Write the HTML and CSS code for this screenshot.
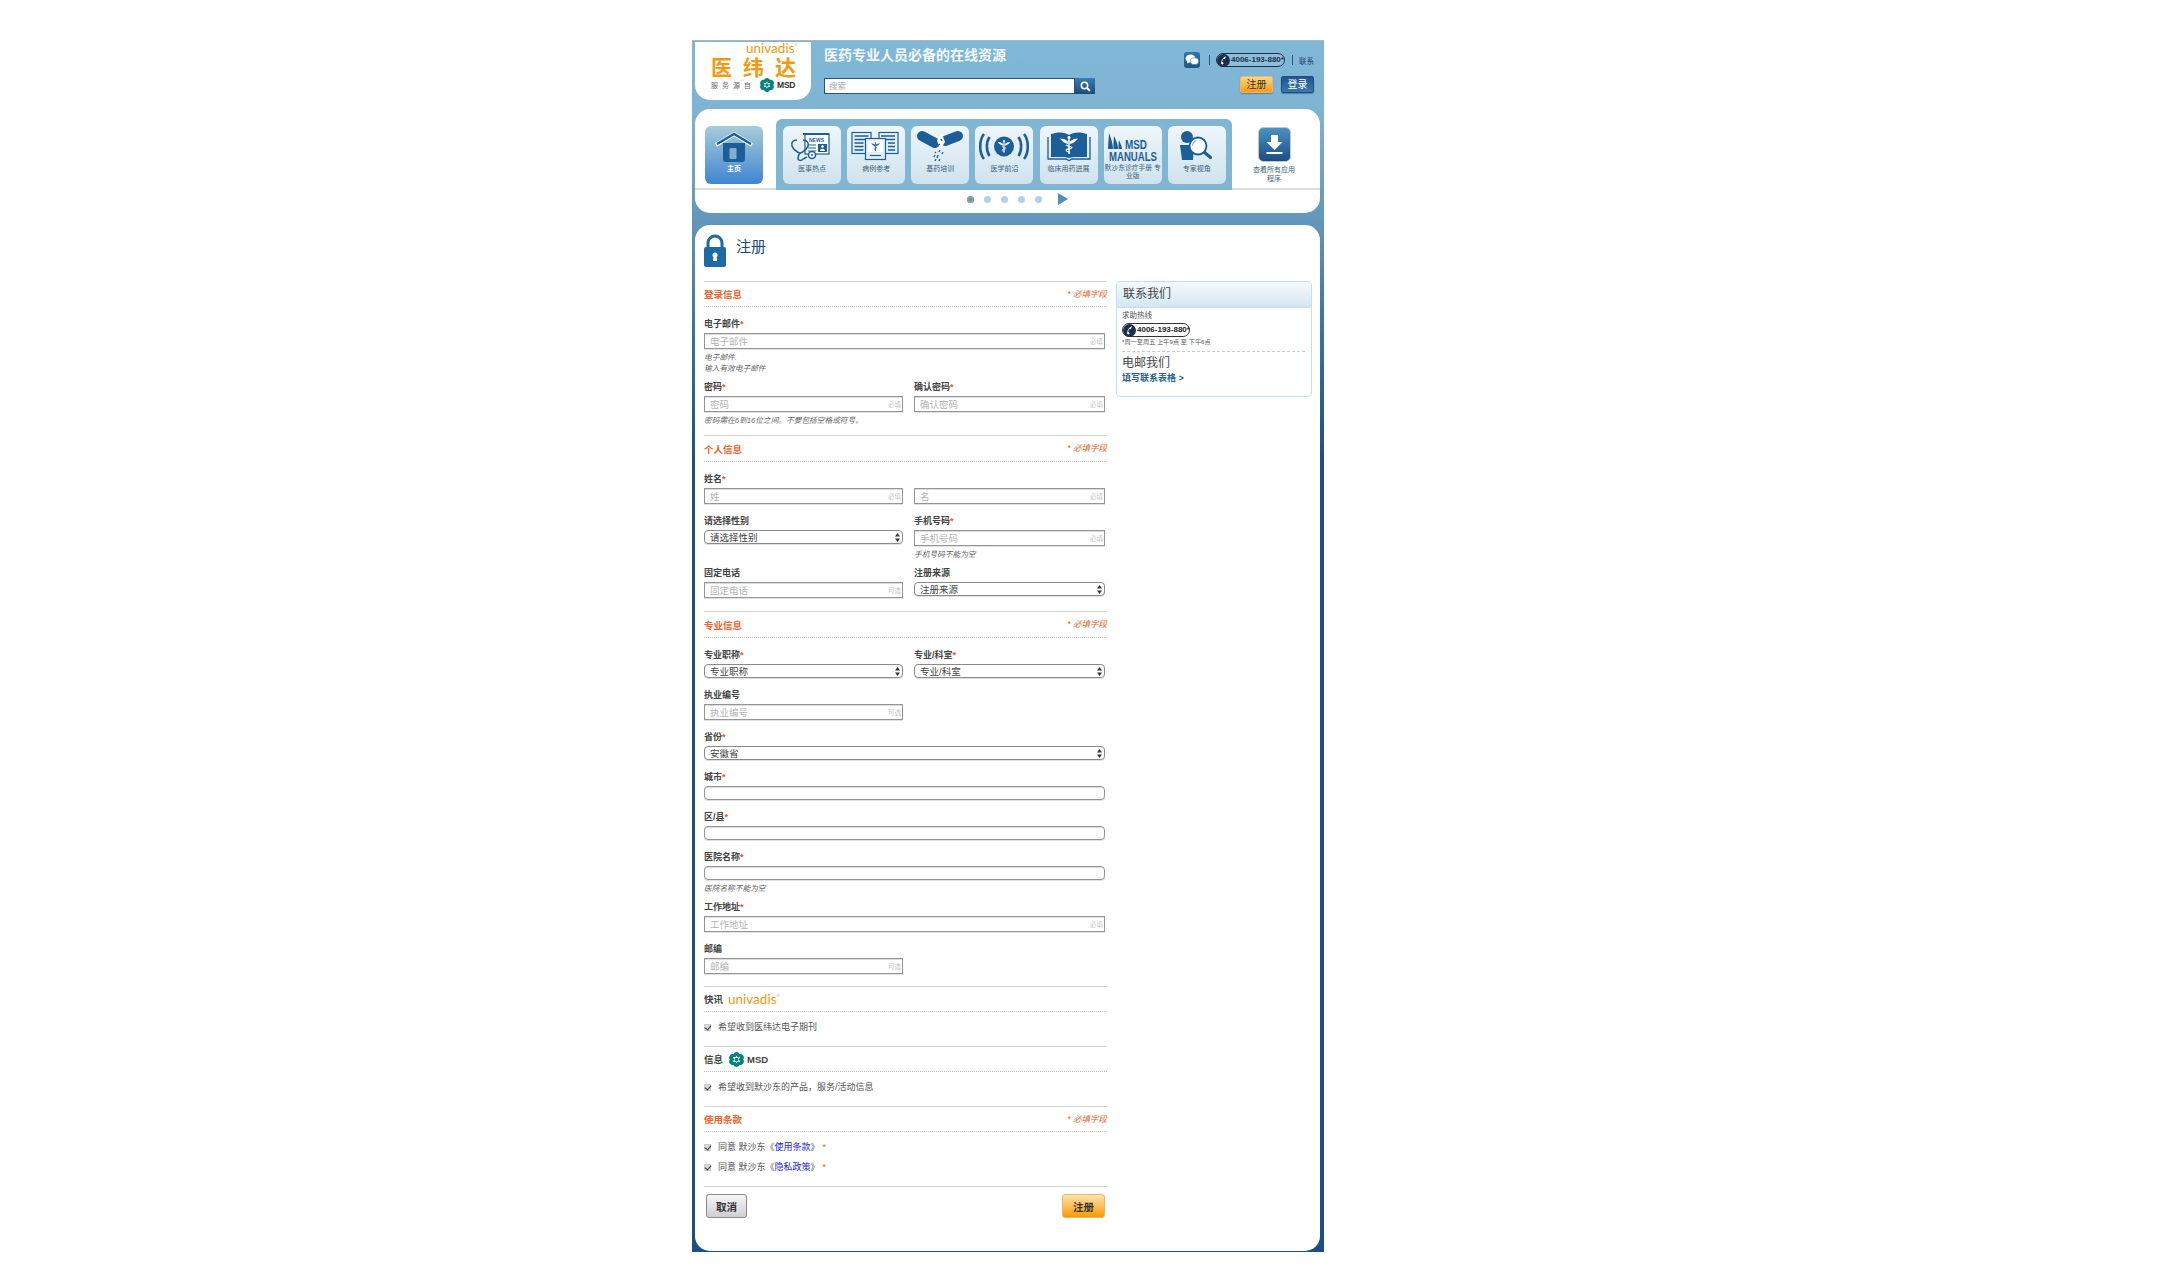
FILE: index.html
```html
<!DOCTYPE html>
<html lang="zh-CN">
<head>
<meta charset="utf-8">
<title>注册 - 医纬达</title>
<link rel="stylesheet" href="styles.css">
</head>
<body>
<svg class="defs" width="0" height="0" aria-hidden="true">
  <symbol id="caduceus" viewBox="0 0 20 20">
    <path d="M10 1v18" stroke="#fff" stroke-width="1.5" fill="none"/>
    <circle cx="10" cy="2.4" r="1.5" fill="#fff"/>
    <path d="M1 3.5c3 .3 6 1 8 3v2.5C6 8.400 3 6.500 1 3.500zM19 3.500c-3 .3-6 1-8 3v2.500c3-.6 6-2.500 8-5.500z" fill="#fff"/>
    <path d="M7 10c2 1.500 6 1 6 2.600s-6 1-6 2.600 3.500 1.400 4 2.300" stroke="#fff" stroke-width="1.100" fill="none"/>
  </symbol>
  <symbol id="caduceus-dark" viewBox="0 0 20 20">
    <path d="M10 1v18" stroke="#1c5e98" stroke-width="1.5" fill="none"/>
    <path d="M1 3.500c3 .3 6 1 8 3v2.500C6 8.400 3 6.500 1 3.500zM19 3.500c-3 .3-6 1-8 3v2.500c3-.6 6-2.500 8-5.500z" fill="#1c5e98"/>
    <path d="M7 10c2 1.500 6 1 6 2.600s-6 1-6 2.600 3.500 1.400 4 2.300" stroke="#1c5e98" stroke-width="1.100" fill="none"/>
  </symbol>
  <symbol id="msd" viewBox="0 0 24 24">
    <path d="M12 0c2.200 0 3.800 1.200 4.800 3.200 2.600-.3 5 .6 6.200 2.800 1.300 2.400 1 4.300-.2 6 1.200 1.700 1.500 3.600.2 6-1.200 2.200-3.600 3.100-6.200 2.800C15.800 22.800 14.200 24 12 24s-3.800-1.200-4.800-3.200C4.600 21.100 2.200 20.200 1 18c-1.300-2.400-1-4.300.2-6C0 10.300-.3 8.400 1 6c1.200-2.200 3.600-3.100 6.200-2.800C8.200 1.200 9.800 0 12 0z" fill="#00857c"/>
    <path d="M6 8.500h4.500L12 6l1.500 2.500H18L15.500 12l2.500 3.500h-4.500L12 18l-1.500-2.500H6L8.500 12z" fill="#fff"/>
    <circle cx="12" cy="12" r="3" fill="#00857c"/>
  </symbol>
  <symbol id="phone" viewBox="0 0 14 14">
    <circle cx="7" cy="7" r="7" fill="#1b2f4d"/>
    <path d="M9.500 2.500c-2.500.8-5 4.300-5 7.500 0 1 .8 1.500 1.600 1.200l1-.6-.8-1.900-.8.200c0-1.400.8-3 1.800-3.800l.6.500 1.200-1.400z" fill="#fff"/>
  </symbol>
  <symbol id="updown" viewBox="0 0 5 9">
    <path d="M2.500 0 5 3.500H0zM2.500 9 0 5.500h5z" fill="#333"/>
  </symbol>
</svg>

<div class="frame">
  <header class="topbar">
    <div class="logo">
      <div class="logo-uni">univadis<sup>®</sup></div>
      <div class="logo-cn">医纬达</div>
      <div class="logo-by"><span class="logo-src">服务源自</span><svg class="logo-msd"><use href="#msd"/></svg><b>MSD</b></div>
    </div>
    <div class="top-main">
      <h1 class="tagline">医药专业人员必备的在线资源</h1>
      <form class="search">
        <input class="search-input" type="text" placeholder="搜索">
        <button class="search-btn" type="button" aria-label="搜索">
          <svg width="11" height="11" viewBox="0 0 11 11"><circle cx="4.500" cy="4.500" r="3.200" fill="none" stroke="#fff" stroke-width="1.500"/><path d="M7 7l3 3" stroke="#fff" stroke-width="2"/></svg>
        </button>
      </form>
    </div>
    <div class="top-side">
      <div class="top-links">
        <span class="wechat">
          <svg width="14" height="12" viewBox="0 0 14 12"><ellipse cx="5.500" cy="4.500" rx="5" ry="4" fill="#fff"/><path d="M2.500 7l-.5 2.500L5 8z" fill="#fff"/><ellipse cx="9.500" cy="7.200" rx="4.200" ry="3.400" fill="#fff" stroke="#2a6a9f" stroke-width=".6"/></svg>
        </span>
        <i class="sep"></i>
        <span class="pill pill-top"><svg class="pill-icon"><use href="#phone"/></svg>4006-193-880*</span>
        <i class="sep"></i>
        <a class="contact-link">联系</a>
      </div>
      <div class="top-btns">
        <a class="tbtn tbtn-orange">注册</a>
        <a class="tbtn tbtn-blue">登录</a>
      </div>
    </div>
  </header>

  <nav class="nav">
    <div class="nav-row">
      <a class="tile tile-home">
        <svg class="tile-icon" viewBox="0 0 58 40">
          <path d="M18 17h22v16a3 3 0 0 1-3 3H21a3 3 0 0 1-3-3z" fill="#1c5e98"/>
          <path d="M11 19 29 8l18 11" fill="none" stroke="#fff" stroke-width="4"/>
          <path d="M12 18 29 8l17 10" fill="none" stroke="#1c5e98" stroke-width="2.400"/>
          <rect x="24.500" y="22" width="7" height="11" rx="1" fill="#7fb0d0"/>
        </svg>
        <span class="tile-text">主页</span>
      </a>
      <div class="tiles">
        <a class="tile">
          <svg class="tile-icon" viewBox="0 0 58 40">
            <rect x="22" y="8" width="24" height="20" fill="#fff" stroke="#1c5e98" stroke-width="1.200"/>
            <path d="M20 7h26v2H20z" fill="#1c5e98"/>
            <text x="26" y="15.500" class="svg-news">NEWS</text>
            <path d="M25 19h8M25 22h8M25 25h8" stroke="#1c5e98" stroke-width="1"/>
            <rect x="35" y="18" width="9" height="8" fill="#1c5e98"/>
            <circle cx="39.500" cy="20.500" r="1.300" fill="#fff"/>
            <path d="M37 25c0-3 5-3 5 0z" fill="#fff"/>
            <path d="M14 14c-4 0-6 2-5 6 1 3 6 7 8 7s7-4 8-7c1-3-1-6-5-6" fill="none" stroke="#1c5e98" stroke-width="1.500"/>
            <path d="M17 27c-1 2-2 3-2 5 0 3 4 3 5 1l4-2" fill="none" stroke="#1c5e98" stroke-width="1.500"/>
            <circle cx="29" cy="29" r="3.500" fill="#fff" stroke="#1c5e98" stroke-width="1.500"/>
            <circle cx="29" cy="29" r="1" fill="#1c5e98"/>
          </svg>
          <span class="tile-text">医事热点</span>
        </a>
        <a class="tile">
          <svg class="tile-icon" viewBox="0 0 58 40">
            <rect x="5" y="6.500" width="19" height="21" fill="none" stroke="#1c5e98" stroke-width="1.200"/>
            <rect x="32" y="6.500" width="19" height="21" fill="none" stroke="#1c5e98" stroke-width="1.200"/>
            <path d="M7.500 10h14M7.500 13.500h14M7.500 17h9M7.500 20.500h9M7.500 24h9M34 10h14M34 13.500h14M41 17h7M41 20.500h7M41 24h7" stroke="#1c5e98" stroke-width="1.300"/>
            <rect x="18.500" y="12.500" width="20" height="21" fill="#e4f0f6" stroke="#1c5e98" stroke-width="1.200"/>
            <rect x="21" y="15" width="15" height="11" fill="#fff"/>
            <svg x="23.500" y="15.500" width="10" height="10"><use href="#caduceus-dark"/></svg>
            <path d="M23 29.500h11" stroke="#1c5e98" stroke-width="1.200"/>
          </svg>
          <span class="tile-text">病例参考</span>
        </a>
        <a class="tile">
          <svg class="tile-icon" viewBox="0 0 58 40">
            <path d="M11 10 24 17" stroke="#1c5e98" stroke-width="10" stroke-linecap="round"/>
            <path d="M47 10 34 15" stroke="#1c5e98" stroke-width="10" stroke-linecap="round"/>
            <path d="M26 14l5-6 3 8-5 8z" fill="#fff"/>
            <path d="M27 19l2-1M30 13l1 2M24 26l1 1M29 24l-1 2M23 31l1-2M27 29l-1 3M32 26l-1 2M24 35l1-2M29 33l-1 2" stroke="#1c5e98" stroke-width="1.300"/>
          </svg>
          <span class="tile-text">基药培训</span>
        </a>
        <a class="tile">
          <svg class="tile-icon" viewBox="0 0 58 40">
            <circle cx="29" cy="20.500" r="10" fill="#1c5e98"/>
            <svg x="22" y="13.500" width="14" height="14"><use href="#caduceus"/></svg>
            <path d="M14.500 11c-3.500 5-3.500 14 0 19M43.500 11c3.500 5 3.500 14 0 19" fill="none" stroke="#1c5e98" stroke-width="2.600"/>
            <path d="M9 8c-5 6-5 19 0 25M49 8c5 6 5 19 0 25" fill="none" stroke="#1c5e98" stroke-width="2.600"/>
          </svg>
          <span class="tile-text">医学前沿</span>
        </a>
        <a class="tile">
          <svg class="tile-icon" viewBox="0 0 58 40">
            <path d="M11 8c7-2.500 14-2 18 1 4-3 11-3.500 18-1v23H33c-1 0-2 1-4 1s-3-1-4-1H11z" fill="#1c5e98"/>
            <path d="M8 11v22h18c1 0 2 1.500 3 1.500s2-1.500 3-1.500h18V11" fill="none" stroke="#1c5e98" stroke-width="1.300"/>
            <svg x="19" y="9" width="20" height="20"><use href="#caduceus"/></svg>
          </svg>
          <span class="tile-text">临床用药进展</span>
        </a>
        <a class="tile">
          <svg class="tile-icon" viewBox="0 0 58 40">
            <path d="M4 23C4 17 5 11 5 7c2 5 4 11 4 16zM9.500 23c0-5 0-9 .5-13 2 4 4 8 4 13zM14.500 23c0-4 0-6 .5-9 1 3 3 6 3 9z" fill="#1c5e98"/>
            <text x="21" y="22.500" class="svg-msd" textLength="22" lengthAdjust="spacingAndGlyphs">MSD</text>
            <text x="5" y="35" class="svg-msd" textLength="48" lengthAdjust="spacingAndGlyphs">MANUALS</text>
          </svg>
          <span class="tile-text tile-text-two">默沙东诊疗手册 专业版</span>
        </a>
        <a class="tile">
          <svg class="tile-icon" viewBox="0 0 58 40">
            <circle cx="19" cy="11" r="6" fill="#1c5e98"/>
            <path d="M12 19h14l-1 15H14z" fill="#1c5e98"/>
            <path d="M36 26l6.500 5.500" stroke="#1c5e98" stroke-width="3.200" stroke-linecap="round"/>
            <circle cx="30" cy="20" r="8.500" fill="#fff" stroke="#1c5e98" stroke-width="1.800"/>
            <path d="M24.500 19.500a6 6 0 0 1 4-5" fill="none" stroke="#7fb0d0" stroke-width="1.300"/>
          </svg>
          <span class="tile-text">专家视角</span>
        </a>
      </div>
      <a class="apps">
        <svg class="apps-icon" viewBox="0 0 33 35">
          <defs><linearGradient id="dl" x1="0" y1="0" x2="0" y2="1"><stop offset="0" stop-color="#4a93c4"/><stop offset="1" stop-color="#1c4c80"/></linearGradient></defs>
          <rect x=".5" y=".5" width="32" height="34" rx="5" fill="url(#dl)" stroke="#bfc7cc"/>
          <path d="M13 8h7v7h4.500l-8 8-8-8H13z" fill="#fff"/>
          <path d="M8.500 26h16" stroke="#fff" stroke-width="2"/>
        </svg>
        <span class="apps-text">查看所有应用程序</span>
      </a>
    </div>
    <div class="pager">
      <i class="dot dot-on"></i><i class="dot"></i><i class="dot"></i><i class="dot"></i><i class="dot"></i>
      <i class="pager-next"></i>
    </div>
  </nav>

  <main class="panel">
    <div class="page-title">
      <svg class="lock" viewBox="0 0 22 33">
        <path d="M4 14V9a7 7 0 0 1 14 0v5" fill="none" stroke="#1d6aa5" stroke-width="3"/>
        <rect y="13" width="22" height="20" rx="2" fill="#1d6aa5"/>
        <circle cx="11" cy="21" r="2.500" fill="#fff"/>
        <path d="M9.500 22h3l.5 5H9z" fill="#fff"/>
      </svg>
      <h2 class="page-h">注册</h2>
    </div>
    <div class="columns">
      <form class="form">
        <section class="sec">
          <div class="sec-head"><h3 class="sec-title">登录信息</h3><span class="req-note">* 必填字段</span></div>
          <div class="field field-full">
            <label class="lab">电子邮件<em>*</em></label>
            <div class="ctl"><input class="inp" placeholder="电子邮件"><span class="tag">必填</span></div>
            <p class="hint">电子邮件.<br>输入有效电子邮件</p>
          </div>
          <div class="row">
            <div class="field">
              <label class="lab">密码<em>*</em></label>
              <div class="ctl"><input class="inp" type="password" placeholder="密码"><span class="tag">必填</span></div>
              <p class="hint">密码需在6到16位之间。不要包括空格或符号。</p>
            </div>
            <div class="field">
              <label class="lab">确认密码<em>*</em></label>
              <div class="ctl"><input class="inp" type="password" placeholder="确认密码"><span class="tag">必填</span></div>
            </div>
          </div>
        </section>

        <section class="sec">
          <div class="sec-head sec-head-tall"><h3 class="sec-title">个人信息</h3><span class="req-note">* 必填字段</span></div>
          <div class="row">
            <div class="field">
              <label class="lab">姓名<em>*</em></label>
              <div class="ctl"><input class="inp" placeholder="姓"><span class="tag">必填</span></div>
            </div>
            <div class="field">
              <label class="lab lab-blank">&nbsp;</label>
              <div class="ctl"><input class="inp" placeholder="名"><span class="tag">必填</span></div>
            </div>
          </div>
          <div class="row">
            <div class="field">
              <label class="lab">请选择性别</label>
              <div class="ctl"><select class="sel"><option>请选择性别</option></select><svg class="sel-arrow"><use href="#updown"/></svg></div>
            </div>
            <div class="field">
              <label class="lab">手机号码<em>*</em></label>
              <div class="ctl"><input class="inp" placeholder="手机号码"><span class="tag">必填</span></div>
              <p class="hint">手机号码不能为空</p>
            </div>
          </div>
          <div class="row">
            <div class="field">
              <label class="lab">固定电话</label>
              <div class="ctl"><input class="inp" placeholder="固定电话"><span class="tag">可选</span></div>
            </div>
            <div class="field">
              <label class="lab">注册来源</label>
              <div class="ctl"><select class="sel"><option>注册来源</option></select><svg class="sel-arrow"><use href="#updown"/></svg></div>
            </div>
          </div>
        </section>

        <section class="sec sec-tight">
          <div class="sec-head sec-head-tall"><h3 class="sec-title">专业信息</h3><span class="req-note">* 必填字段</span></div>
          <div class="row">
            <div class="field">
              <label class="lab">专业职称<em>*</em></label>
              <div class="ctl"><select class="sel"><option>专业职称</option></select><svg class="sel-arrow"><use href="#updown"/></svg></div>
            </div>
            <div class="field">
              <label class="lab">专业/科室<em>*</em></label>
              <div class="ctl"><select class="sel"><option>专业/科室</option></select><svg class="sel-arrow"><use href="#updown"/></svg></div>
            </div>
          </div>
          <div class="row">
            <div class="field">
              <label class="lab">执业编号</label>
              <div class="ctl"><input class="inp" placeholder="执业编号"><span class="tag">可选</span></div>
            </div>
          </div>
          <div class="field field-full">
            <label class="lab">省份<em>*</em></label>
            <div class="ctl"><select class="sel"><option>安徽省</option></select><svg class="sel-arrow"><use href="#updown"/></svg></div>
          </div>
          <div class="field field-full">
            <label class="lab">城市<em>*</em></label>
            <div class="ctl"><input class="inp inp-round"></div>
          </div>
          <div class="field field-full">
            <label class="lab">区/县<em>*</em></label>
            <div class="ctl"><input class="inp inp-round"></div>
          </div>
          <div class="field field-full">
            <label class="lab">医院名称<em>*</em></label>
            <div class="ctl"><input class="inp inp-round"></div>
            <p class="hint">医院名称不能为空</p>
          </div>
          <div class="field field-full">
            <label class="lab">工作地址<em>*</em></label>
            <div class="ctl"><input class="inp" placeholder="工作地址"><span class="tag">必填</span></div>
          </div>
          <div class="row">
            <div class="field">
              <label class="lab">邮编</label>
              <div class="ctl"><input class="inp" placeholder="邮编"><span class="tag">可选</span></div>
            </div>
          </div>
        </section>

        <section class="sec">
          <div class="sec-head sec-head-plain">
            <h3 class="sec-title sec-title-plain">快讯</h3>
            <span class="uni-mini">univadis<sup>®</sup></span>
          </div>
          <div class="checks">
            <label class="check"><input type="checkbox" checked>希望收到医纬达电子期刊</label>
          </div>
        </section>

        <section class="sec">
          <div class="sec-head sec-head-plain">
            <h3 class="sec-title sec-title-plain">信息</h3>
            <svg class="msd-mini"><use href="#msd"/></svg><b class="msd-word">MSD</b>
          </div>
          <div class="checks">
            <label class="check"><input type="checkbox" checked>希望收到默沙东的产品，服务/活动信息</label>
          </div>
        </section>

        <section class="sec">
          <div class="sec-head"><h3 class="sec-title">使用条款</h3><span class="req-note">* 必填字段</span></div>
          <div class="checks">
            <label class="check"><input type="checkbox" checked>同意 默沙东《<a class="term">使用条款</a>》<em class="star">*</em></label>
            <label class="check"><input type="checkbox" checked>同意 默沙东《<a class="term">隐私政策</a>》<em class="star">*</em></label>
          </div>
        </section>

        <div class="actions">
          <button class="btn btn-grey" type="button">取消</button>
          <button class="btn btn-orange" type="button">注册</button>
        </div>
      </form>

      <aside class="contact">
        <h3 class="contact-head">联系我们</h3>
        <div class="contact-body">
          <p class="hot">求助热线</p>
          <span class="pill pill-box"><svg class="pill-icon"><use href="#phone"/></svg>4006-193-880*</span>
          <p class="hours">*周一至周五 上午9点 至 下午6点</p>
          <h4 class="mail-h">电邮我们</h4>
          <a class="mail-link">填写联系表格 &gt;</a>
        </div>
      </aside>
    </div>
  </main>
</div>
</body>
</html>
```

FILE: styles.css
```css
* { box-sizing: border-box; }
html, body { margin: 0; padding: 0; background: #fff; }
body { font-family: "Liberation Sans", "Noto Sans CJK SC", sans-serif; color: #444; }
h1, h2, h3, h4, p { margin: 0; font-weight: normal; }
em { font-style: normal; color: #e8581c; }
.defs { position: absolute; }

.frame {
  width: 632px;
  height: 1212px;
  margin: 40px 0 0 692px;
  padding: 1px 4px 3px 3px;
  border-top: 1px solid #aeb4b8;
  background: linear-gradient(#80b7d7 0, #7fb3d2 70px, #5f93b8 190px, #3f74a3 280px, #1d4f86 420px, #1d4f86 1212px);
}

/* header */
.topbar { display: flex; height: 67px; }
.logo {
  width: 116px;
  height: 58px;
  padding: 1px 0 0 16px;
  background: #fff;
  border-radius: 0 0 15px 15px;
}
.logo-uni { height: 11px; padding-left: 35px; font: 400 13.5px/11px Lato, sans-serif; color: #f39a0f; }
.logo-uni sup, .uni-mini sup { font-size: 4px; line-height: 0; vertical-align: 7px; }
.logo-cn { height: 22px; margin-top: 3px; font-size: 21px; line-height: 22px; font-weight: bold; letter-spacing: 11px; color: #f39a0f; white-space: nowrap; }
.logo-by { display: flex; align-items: center; height: 14px; margin-top: -1px; }
.logo-src { width: 49px; font-size: 7px; letter-spacing: 4px; color: #666; white-space: nowrap; }
.logo-msd { width: 14px; height: 14px; }
.logo-by b { margin-left: 3px; font-size: 8.500px; letter-spacing: -.2px; color: #333; }

.top-main { width: 271px; margin-left: 13px; }
.tagline { height: 36px; padding-top: 5px; font-size: 14px; line-height: 16px; font-weight: bold; color: #f2f8fb; white-space: nowrap; }
.search { display: flex; height: 16px; }
.search-input { width: 251px; height: 16px; padding: 0 4px; border: 1px solid #24557f; background: #fff; font: 8.500px "Liberation Sans", "Noto Sans CJK SC", sans-serif; outline: 0; }
.search-input::placeholder { color: #aaa; }
.search-btn { display: flex; align-items: center; justify-content: center; width: 20px; height: 16px; padding: 0; border: 0; background: linear-gradient(#3b7cae, #1b4a7e); }

.top-side { flex: 1; display: flex; flex-direction: column; align-items: flex-end; padding: 10px 6px 0 0; }
.top-links { display: flex; align-items: center; height: 16px; }
.wechat { display: flex; align-items: center; justify-content: center; width: 16px; height: 16px; border-radius: 3px; background: linear-gradient(#2d76ab, #1f5487); }
.sep { width: 1px; height: 10px; margin: 0 6px 0 9px; background: #27587f; }
.pill { display: flex; align-items: center; font-size: 8px; line-height: 14px; font-weight: bold; white-space: nowrap; border-radius: 8px; }
.pill-icon { width: 13px; height: 13px; margin-right: 1px; flex: none; }
.pill-top { width: 69px; height: 14px; color: #1b2f4d; border: 1px solid #1b2f4d; background: rgba(255,255,255,.12); }
.pill-top + .sep { margin-left: 7px; }
.contact-link { font-size: 7.500px; color: #1f4468; }
.top-btns { display: flex; gap: 8px; margin-top: 8px; }
.tbtn { display: block; width: 33px; height: 17px; border-radius: 2px; font-size: 10px; line-height: 16px; text-align: center; box-shadow: 0 1px 1px rgba(0,40,80,.35); }
.tbtn-orange { color: #333; background: linear-gradient(#fdd588, #fb9d0f); border: 1px solid #f0b560; }
.tbtn-blue { color: #fff; background: linear-gradient(#21578f, #3a78ab); border: 1px solid #1c4c80; }

/* nav */
.nav { height: 104px; border-radius: 15px; background: #fff; }
.nav-row { display: flex; height: 81px; border-bottom: 2px solid #ddd; }
.tiles {
  display: flex;
  gap: 6.150px;
  height: 71px;
  margin: 10px 0 -2px 13px;
  padding: 7px 7px 0;
  width: 456px;
  border-radius: 6px 6px 0 0;
  background: #80b6d4;
}
.tile {
  display: block;
  width: 58px;
  height: 58px;
  border-radius: 6px;
  background: linear-gradient(#eef6fa, #cfe3ee);
  text-align: center;
}
.tile-home { margin: 17px 0 0 10px; background: linear-gradient(#a8ccd8, #3f85d2); }
.tile-icon { display: block; width: 58px; height: 40px; }
.tile-text { display: block; margin-top: -1px; font-size: 7px; line-height: 8px; color: #3f5f78; }
.tile-text-two { margin-top: -2px; font-size: 6.800px; }
.tile-home .tile-text { color: #fff; font-weight: bold; }
.svg-news { font-size: 5px; font-weight: bold; fill: #1c5e98; }
.svg-msd { font-size: 12px; font-weight: bold; fill: #1c5e98; }
.apps { display: block; width: 84px; padding-top: 18px; margin-left: 0; text-align: center; }
.apps-icon { display: block; width: 33px; height: 35px; margin: 0 auto; }
.apps-text { display: block; width: 46px; margin: 3px auto 0; font-size: 7px; line-height: 9px; color: #3f5f78; }
.pager { display: flex; align-items: center; height: 21px; padding: 0 0 3px 272px; gap: 10px; }
.dot { width: 7px; height: 7px; border-radius: 50%; background: #b0d2e6; }
.dot-on { background: #7b8e99; box-shadow: inset 0 0 0 1.500px #8aa; }
.pager-next { width: 0; height: 0; margin-left: 6px; border-left: 10px solid #4f8fb9; border-top: 6px solid transparent; border-bottom: 6px solid transparent; }

/* main panel */
.panel { height: 1026px; margin-top: 12px; padding: 0 8px 0 9px; border-radius: 15px; background: #fff; }
.page-title { display: flex; height: 56px; padding-top: 9px; }
.lock { width: 22px; height: 33px; }
.page-h { margin: 4px 0 0 10px; font-size: 15px; line-height: 18px; color: #1b4a7a; }
.columns { display: flex; gap: 9px; align-items: flex-start; }
.form { width: 403px; }

.sec { margin-bottom: 2px; }
.sec-tight { margin-bottom: 1px; }
.sec-head {
  display: flex;
  justify-content: space-between;
  align-items: center;
  height: 26px;
  border-top: 1px solid #d4d4d4;
  border-bottom: 1px dotted #c4c4c4;
  margin-bottom: 11px;
}
.sec-head-tall { height: 27px; }
.sec-head-plain { justify-content: flex-start; }
.sec-title { font-size: 9.500px; font-weight: bold; color: #e8642a; }
.sec-title-plain { color: #444; width: 24px; }
.req-note { margin-top: -3px; font-size: 8.500px; font-style: italic; color: #e8642a; }

.row { display: grid; grid-template-columns: 199px 191px; column-gap: 11px; }
.field { margin-bottom: 11px; }
.field-full { margin-right: 2px; }
.lab { display: block; height: 12px; margin-bottom: 3px; font-size: 9px; line-height: 12px; font-weight: bold; color: #444; }
.ctl { position: relative; }
.inp {
  display: block;
  width: 100%;
  height: 16px;
  padding: 0 5px;
  border: 1px solid #959595;
  border-radius: 0;
  background: #fff;
  box-shadow: 0 1px 0 #e2e2e2, inset 0 1px 0 #ddd;
  font: 9.500px "Liberation Sans", "Noto Sans CJK SC", sans-serif;
  outline: 0;
}
.inp::placeholder { color: #b5b5b5; }
.inp-round { height: 14px; border-radius: 4px; }
.tag { position: absolute; top: 5px; right: 2px; font-size: 6.500px; line-height: 8px; color: #c4c4c4; }
.sel {
  display: block;
  width: 100%;
  height: 14px;
  padding: 1px 0 0 5px;
  appearance: none;
  border: 1px solid #8a8a8a;
  border-radius: 4px;
  background: #fff;
  box-shadow: 0 1px 0 #e2e2e2;
  font: 9.500px/12px "Liberation Sans", "Noto Sans CJK SC", sans-serif;
  color: #444;
  outline: 0;
}
.sel-arrow { position: absolute; top: 3px; right: 3px; width: 5px; height: 9px; }
.hint { margin: 3px 0 -4px; font-size: 7.700px; line-height: 11px; font-style: italic; color: #666; white-space: nowrap; }

.uni-mini { font: 400 13.500px/14px Lato, sans-serif; color: #f39a0f; }
.msd-mini { width: 15px; height: 15px; margin-left: 1px; }
.msd-word { margin-left: 3px; font-size: 9.500px; color: #444; }
.checks { display: flex; flex-direction: column; gap: 10px; margin-top: -11px; padding: 10px 0 12px; }
.check { display: flex; align-items: center; height: 10px; font-size: 9px; line-height: 10px; color: #555; }
.check input {
  appearance: none;
  position: relative;
  width: 7px;
  height: 7px;
  margin: 0 7px 0 0;
  border-radius: 1px;
  background: #dcdcdc;
  box-shadow: inset 0 0 0 1px #c8c8c8;
}
.check input:checked::after {
  content: "";
  position: absolute;
  left: 2px;
  top: 0;
  width: 3px;
  height: 5px;
  border: solid #333;
  border-width: 0 1.300px 1.300px 0;
  transform: rotate(40deg);
}
.term { color: #2222dd; }
.star { margin-left: 3px; }

.actions { display: flex; justify-content: space-between; height: 33px; padding: 7px 2px 0; border-top: 1px solid #d4d4d4; }
.btn { width: 41px; height: 24px; padding: 0; border-radius: 3px; font: bold 10.500px "Liberation Sans", "Noto Sans CJK SC", sans-serif; color: #333; }
.btn-grey { border: 1px solid #8a8a8a; background: linear-gradient(#f6f6f6, #cfcfcf); }
.btn-orange { width: 43px; border: 1px solid #f0b560; background: linear-gradient(#fde3b0, #fb9a00); }

/* contact */
.contact { width: 196px; height: 116px; border: 1px solid #bfe0f2; border-radius: 4px; }
.contact-head { height: 26px; padding-left: 6px; border-bottom: 1px solid #bfe0f2; border-radius: 3px 3px 0 0; background: linear-gradient(#f5fafc, #d5e6f1); font-size: 12px; line-height: 25px; color: #444; }
.contact-body { padding: 3px 6px 0 5px; }
.hot { font-size: 7.500px; line-height: 10px; color: #555; }
.pill-box { width: 68px; height: 14px; margin-top: 2px; color: #222; border: 1px solid #333; }
.hours { height: 14px; margin-top: 1px; border-bottom: 1px dashed #ccc; font-size: 6.200px; line-height: 8px; color: #555; }
.mail-h { margin-top: 4px; font-size: 12px; line-height: 14px; color: #444; }
.mail-link { display: block; margin-top: 2px; font-size: 9px; line-height: 12px; font-weight: bold; color: #2a5f8f; }
```
